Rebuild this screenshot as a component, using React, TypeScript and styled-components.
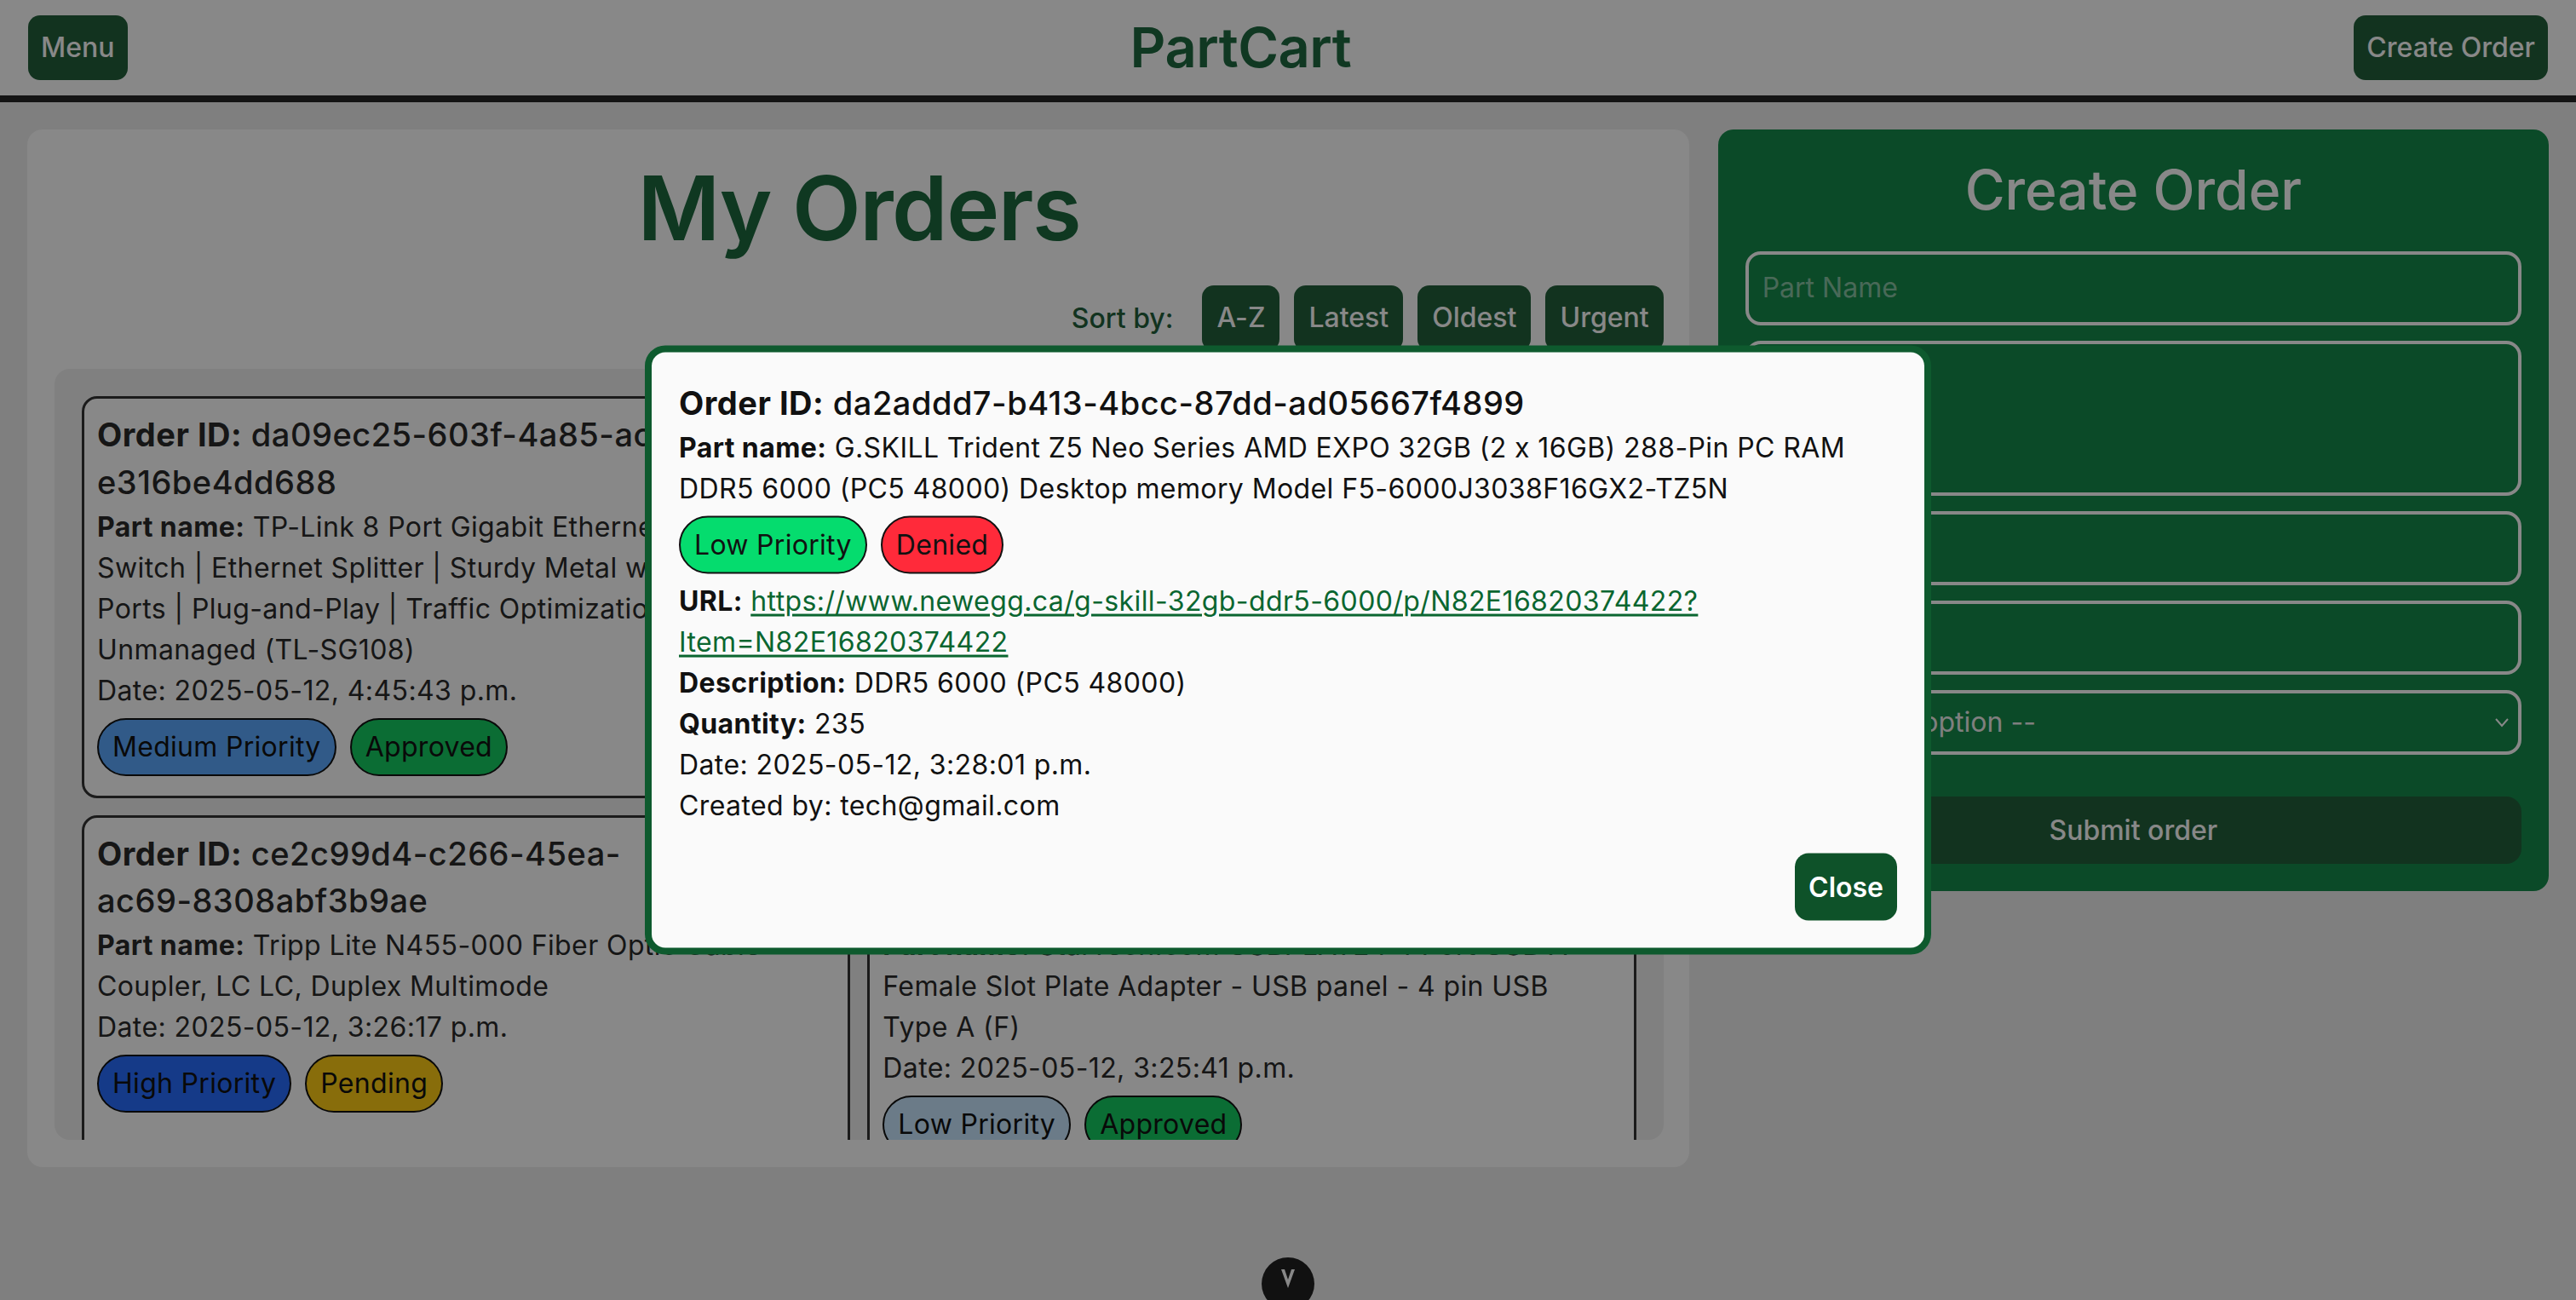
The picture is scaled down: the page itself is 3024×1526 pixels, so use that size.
import React from "react";
import styled, { createGlobalStyle } from "styled-components";

const GlobalStyle = createGlobalStyle`
  html, body { margin: 0; padding: 0; }
  body {
    background: #eeeeee;
    font-family: Inter, "Liberation Sans", "DejaVu Sans", sans-serif;
    font-feature-settings: "calt" 0;
    color: #333333;
    min-height: 100vh;
  }
  * { box-sizing: border-box; }
`;

const Page = styled.div`
  min-height: 100vh;
`;

const Header = styled.header`
  height: 120px;
  background: #ffffff;
  border-bottom: 8px solid #262626;
  display: flex;
  align-items: center;
  justify-content: space-between;
  padding: 0 33px;
`;

const DarkButton = styled.button`
  background: #22603a;
  color: #ffffff;
  border: none;
  border-radius: 14px;
  padding: 16px 15px;
  font-family: inherit;
  font-feature-settings: "calt" 0;
  font-size: 32px;
  font-weight: 500;
  line-height: 1.4;
  cursor: pointer;
`;

const Brand = styled.h1`
  margin: 0;
  font-size: 65px;
  font-weight: 600;
  letter-spacing: -0.5px;
  color: #1e6940;
  line-height: 1.2;
`;

const Main = styled.main`
  display: grid;
  grid-template-columns: 2fr 1fr;
  gap: 34px;
  padding: 32px 32px;
  align-items: start;
`;

const OrdersCard = styled.section`
  background: #ffffff;
  border-radius: 18px;
  padding: 28px 30px 32px 32px;
`;

const PageTitle = styled.h2`
  margin: 0;
  text-align: center;
  font-size: 105px;
  font-weight: 600;
  letter-spacing: -1.5px;
  line-height: 1.21;
  color: #1d6a3f;
`;

const SortBar = styled.div`
  display: flex;
  justify-content: flex-end;
  align-items: center;
  gap: 17px;
  margin-top: 28px;
`;

const SortLabel = styled.span`
  font-size: 32px;
  font-weight: 500;
  color: #22603a;
  margin-right: 17px;
`;

const SortButton = styled(DarkButton)`
  padding: 16px 17px;
`;

const OrderList = styled.div`
  margin-top: 21px;
  height: 905px;
  background: #f0f0f0;
  border-radius: 18px;
  padding: 32px;
  overflow: hidden;
  display: grid;
  grid-template-columns: 1fr 1fr;
  gap: 20px;
  align-content: start;
`;

const OrderCard = styled.article`
  background: #ffffff;
  border: 3px solid #333333;
  border-radius: 18px;
  padding: 15px;
  color: #2a2a2a;
`;

const OrderTitle = styled.h3`
  margin: 0;
  font-size: 38px;
  line-height: 1.47;
  font-weight: 500;
  letter-spacing: 0.5px;
  strong { font-weight: 700; }
`;

const Field = styled.p`
  margin: 0;
  font-size: 32px;
  line-height: 1.5;
  letter-spacing: 0.4px;
  strong { font-weight: 700; }
`;

const BadgeRow = styled.div`
  display: flex;
  flex-wrap: wrap;
  gap: 16px;
  margin: 8px 0;
`;

const toneColors: Record<string, string> = {
  medium: "#5ca9ff",
  high: "#286dff",
  low: "#c8e7ff",
  lowBright: "#05dc6e",
  approved: "#16cc62",
  pending: "#ffcd15",
  denied: "#ff2a3a",
};

const Badge = styled.span<{ $tone: string }>`
  display: inline-block;
  padding: 8px 16px;
  border: 2px solid #111111;
  border-radius: 999px;
  font-size: 32px;
  line-height: 48px;
  letter-spacing: 0.3px;
  color: #111111;
  background: ${(p) => toneColors[p.$tone]};
`;

const FormPanel = styled.section`
  background: #158b4b;
  border-radius: 18px;
  padding: 32px;
  display: flex;
  flex-direction: column;
`;

const FormTitle = styled.h2`
  margin: 0 0 34px;
  text-align: center;
  font-size: 64px;
  font-weight: 500;
  line-height: 1.21;
  color: #ffffff;
`;

const FormFields = styled.div`
  display: flex;
  flex-direction: column;
  gap: 18px;
`;

const fieldBase = `
  width: 100%;
  background: transparent;
  border: 4px solid #ffffff;
  border-radius: 18px;
  font-family: inherit;
  font-size: 32px;
  color: #ffffff;
  outline: none;
  &::placeholder { color: rgba(255, 255, 255, 0.5); }
`;

const TextInput = styled.input`
  ${fieldBase}
  padding: 20px 16px;
  line-height: 1.21;
`;

const TextArea = styled.textarea`
  ${fieldBase}
  height: 182px;
  padding: 20px 16px;
  resize: none;
  line-height: 1.21;
`;

const SelectWrap = styled.div`
  position: relative;
`;

const Select = styled.select`
  ${fieldBase}
  appearance: none;
  height: 76px;
  padding: 0 16px;
  color: #eeeeee;
  option { color: #111111; }
`;

const SelectChevron = styled.svg`
  position: absolute;
  right: 14px;
  top: 50%;
  transform: translateY(-50%);
  pointer-events: none;
`;

const SubmitButton = styled.button`
  margin-top: 49px;
  height: 79px;
  width: 100%;
  border: none;
  border-radius: 18px;
  background: #22603a;
  color: #ffffff;
  font-family: inherit;
  font-size: 32px;
  font-weight: 500;
`;

const ScrollButton = styled.button`
  position: fixed;
  left: 50%;
  bottom: -12px;
  transform: translateX(-50%);
  width: 62px;
  height: 62px;
  border-radius: 50%;
  border: none;
  background: #202020;
  display: flex;
  align-items: flex-start;
  justify-content: center;
  padding-top: 12px;
`;

const Backdrop = styled.div`
  position: fixed;
  inset: 0;
  background: rgba(0, 0, 0, 0.467);
  z-index: 5;
`;

const Modal = styled.div`
  position: fixed;
  top: 50%;
  left: 50%;
  transform: translate(-50%, -50%);
  width: 1510px;
  background: #fafafa;
  border: 8px solid #0e5a2e;
  border-radius: 24px;
  padding: 32px;
  z-index: 10;
  color: #111111;
`;

const ModalLink = styled.a`
  color: #0a6630;
  text-decoration: underline;
  text-decoration-thickness: 3px;
  text-underline-offset: 4px;
`;

const ModalActions = styled.div`
  display: flex;
  justify-content: flex-end;
  margin-top: 32px;
`;

const CloseButton = styled.button`
  background: #0e5229;
  color: #ffffff;
  border: none;
  border-radius: 16px;
  padding: 16px 16px;
  font-family: inherit;
  font-size: 32px;
  font-weight: 600;
  line-height: 1.47;
`;

type Order = {
  id: string;
  part: string;
  date: string;
  priority: [string, string];
  status: [string, string];
};

const orders: Order[] = [
  {
    id: "da09ec25-603f-4a85-ac1f-e316be4dd688",
    part:
      "TP-Link 8 Port Gigabit Ethernet Network Switch | Ethernet Splitter | Sturdy Metal w/ Shielded Ports | Plug-and-Play | Traffic Optimization | Unmanaged (TL-SG108)",
    date: "2025-05-12, 4:45:43 p.m.",
    priority: ["Medium Priority", "medium"],
    status: ["Approved", "approved"],
  },
  {
    id: "da2addd7-b413-4bcc-87dd-ad05667f4899",
    part:
      "G.SKILL Trident Z5 Neo Series AMD EXPO 32GB (2 x 16GB) 288-Pin PC RAM DDR5 6000 (PC5 48000) Desktop memory Model F5-6000J3038F16GX2-TZ5N",
    date: "2025-05-12, 3:28:01 p.m.",
    priority: ["Low Priority", "low"],
    status: ["Denied", "denied"],
  },
  {
    id: "ce2c99d4-c266-45ea-ac69-8308abf3b9ae",
    part: "Tripp Lite N455-000 Fiber Optic Cable Coupler, LC LC, Duplex Multimode",
    date: "2025-05-12, 3:26:17 p.m.",
    priority: ["High Priority", "high"],
    status: ["Pending", "pending"],
  },
  {
    id: "4f1c2a9e-7d3b-4b6a-be2f-1c8d5a7b3e60",
    part:
      "StarTech.com USBPLATE4 4 Port USB A Female Slot Plate Adapter - USB panel - 4 pin USB Type A (F)",
    date: "2025-05-12, 3:25:41 p.m.",
    priority: ["Low Priority", "low"],
    status: ["Approved", "approved"],
  },
  {
    id: "81b0e6d3-2f4a-4c7e-a5d9-63e2f0b1c7a4",
    part: "Noctua NH-U12S, Premium CPU Cooler with NF-F12 120mm Fan (Brown)",
    date: "2025-05-12, 3:20:09 p.m.",
    priority: ["Medium Priority", "medium"],
    status: ["Pending", "pending"],
  },
  {
    id: "b93d7f12-6a8e-4d21-9c3b-0e5f7a2d8c16",
    part: "Samsung 990 PRO SSD 2TB PCIe 4.0 M.2 2280 Internal Solid State Drive",
    date: "2025-05-12, 3:12:55 p.m.",
    priority: ["High Priority", "high"],
    status: ["Approved", "approved"],
  },
];

// A hyphen followed by a digit is not a line-break opportunity (as in the original browser).
const formatId = (id: string) => id.replace(/-(?=\d)/g, "-\u2060");

const ChevronDown = () => (
  <svg width="20" height="26" viewBox="0 0 20 26" aria-hidden="true">
    <path d="M2 2 L10 24 L18 2 L14 2 L10 14 L6 2 Z" fill="#ffffff" />
  </svg>
);

export default function App() {
  return (
    <Page>
      <GlobalStyle />
      <Header>
        <DarkButton>Menu</DarkButton>
        <Brand>PartCart</Brand>
        <DarkButton>Create Order</DarkButton>
      </Header>

      <Main>
        <OrdersCard>
          <PageTitle>My Orders</PageTitle>
          <SortBar>
            <SortLabel>Sort by:</SortLabel>
            <SortButton>A-Z</SortButton>
            <SortButton>Latest</SortButton>
            <SortButton>Oldest</SortButton>
            <SortButton>Urgent</SortButton>
          </SortBar>
          <OrderList>
            {orders.map((o) => (
              <OrderCard key={o.id}>
                <OrderTitle>
                  <strong>Order ID:</strong> {formatId(o.id)}
                </OrderTitle>
                <Field>
                  <strong>Part name:</strong> {o.part}
                </Field>
                <Field>Date: {o.date}</Field>
                <BadgeRow>
                  <Badge $tone={o.priority[1]}>{o.priority[0]}</Badge>
                  <Badge $tone={o.status[1]}>{o.status[0]}</Badge>
                </BadgeRow>
              </OrderCard>
            ))}
          </OrderList>
        </OrdersCard>

        <FormPanel>
          <FormTitle>Create Order</FormTitle>
          <FormFields>
            <TextInput placeholder="Part Name" />
            <TextArea placeholder="Description" />
            <TextInput placeholder="URL" />
            <TextInput placeholder="Quantity" />
            <SelectWrap>
              <Select defaultValue="">
                <option value="">-- Select an option --</option>
                <option value="low">Low</option>
                <option value="medium">Medium</option>
                <option value="high">High</option>
              </Select>
              <SelectChevron width="18" height="12" viewBox="0 0 18 12" aria-hidden="true">
                <polyline points="2,2 9,10 16,2" fill="none" stroke="#ffffff" strokeWidth="2" />
              </SelectChevron>
            </SelectWrap>
          </FormFields>
          <SubmitButton>Submit order</SubmitButton>
        </FormPanel>
      </Main>

      <ScrollButton aria-label="Scroll down">
        <ChevronDown />
      </ScrollButton>

      <Backdrop />

      <Modal role="dialog">
        <OrderTitle>
          <strong>Order ID:</strong> da2addd7-b413-4bcc-87dd-ad05667f4899
        </OrderTitle>
        <Field>
          <strong>Part name:</strong> G.SKILL Trident Z5 Neo Series AMD EXPO 32GB (2 x 16GB) 288-Pin PC
          RAM DDR5 6000 (PC5 48000) Desktop memory Model F5-6000J3038F16GX2-TZ5N
        </Field>
        <BadgeRow>
          <Badge $tone="lowBright">Low Priority</Badge>
          <Badge $tone="denied">Denied</Badge>
        </BadgeRow>
        <Field>
          <strong>URL:</strong>{" "}
          <ModalLink href="#">
            https://www.newegg.ca/g-skill-32gb-ddr5-6000/p/N82E16820374422?Item=N82E16820374422
          </ModalLink>
        </Field>
        <Field>
          <strong>Description:</strong> DDR5 6000 (PC5 48000)
        </Field>
        <Field>
          <strong>Quantity:</strong> 235
        </Field>
        <Field>Date: 2025-05-12, 3:28:01 p.m.</Field>
        <Field>Created by: tech@gmail.com</Field>
        <ModalActions>
          <CloseButton>Close</CloseButton>
        </ModalActions>
      </Modal>
    </Page>
  );
}
